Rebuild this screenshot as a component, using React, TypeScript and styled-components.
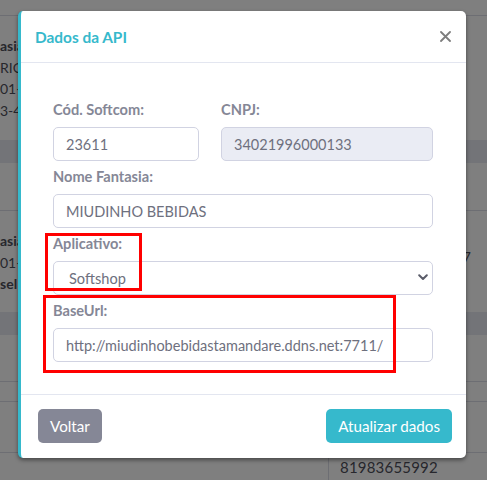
import React from "react";
import styled, { createGlobalStyle } from "styled-components";

const GlobalStyle = createGlobalStyle`
  html, body { margin: 0; padding: 0; }
  body { font-family: "Lato", "Noto Sans", sans-serif; }
  * { box-sizing: border-box; }
`;

const Page = styled.div`
  position: relative;
  width: 487px;
  height: 480px;
  overflow: hidden;
  background: #ffffff;
  color: #5a5c69;
`;

const Backdrop = styled.div`
  display: flex;
  flex-direction: column;
`;

const BgRow = styled.div<{ $h: number; $band?: boolean; $line?: boolean }>`
  height: ${(p) => p.$h}px;
  background: ${(p) => (p.$band ? "#e6e8f0" : "#ffffff")};
  border-bottom: ${(p) => (p.$line ? "1px solid #dadce6" : "none")};
  display: flex;
  justify-content: space-between;
`;

const BgCellLeft = styled.div`
  display: flex;
  flex-direction: column;
  padding-top: 19px;
  font-size: 14px;
  line-height: 21.7px;
  color: #4e4f5a;
`;

const BgText = styled.span<{ $bold?: boolean }>`
  font-weight: ${(p) => (p.$bold ? 700 : 400)};
  white-space: nowrap;
`;

const BgCellRight = styled.div`
  padding-top: 37px;
  padding-right: 16px;
  font-size: 14px;
  color: #4e4f5a;
`;

const BgSplitRow = styled.div<{ $h: number; $line?: boolean }>`
  height: ${(p) => p.$h}px;
  display: grid;
  grid-template-columns: 328px 1fr;
  border-bottom: ${(p) => (p.$line ? "1px solid #dadce6" : "none")};
`;

const BgSplitCell = styled.div`
  border-left: 1px solid #dadce6;
  padding: 5px 0 0 11px;
  font-size: 15px;
  color: #4e4f5a;
  letter-spacing: 0.2px;
`;

const Overlay = styled.div`
  position: absolute;
  inset: 0;
  background: rgba(0, 0, 0, 0.5);
`;

const Modal = styled.div`
  position: absolute;
  left: 18px;
  top: 11px;
  width: 448px;
  background: #ffffff;
  border-left: 3px solid #36b9cc;
  border-radius: 5px;
  box-shadow: 0 2px 4px rgba(0, 0, 0, 0.45);
  display: flex;
  flex-direction: column;
`;

const Header = styled.div`
  height: 52px;
  padding: 0 15px 0 14px;
  display: flex;
  align-items: center;
  justify-content: space-between;
  border-bottom: 1px solid #e3e6f0;
`;

const Title = styled.h5`
  margin: 0;
  font-size: 15.4px;
  font-weight: 700;
  color: #36b9cc;
`;

const CloseButton = styled.button`
  border: 0;
  background: transparent;
  padding: 0;
  width: 12px;
  height: 12px;
  display: flex;
  align-items: center;
  justify-content: center;
  cursor: pointer;
`;

const Body = styled.div`
  padding: 36px 33px 32px 32px;
  display: flex;
  flex-direction: column;
  gap: 5px;
`;

const TwoCols = styled.div`
  display: grid;
  grid-template-columns: 146px 212px;
  column-gap: 22px;
`;

const Field = styled.div`
  display: flex;
  flex-direction: column;
`;

const Label = styled.label`
  height: 22px;
  line-height: 22px;
  margin-bottom: 6px;
  font-size: 14.6px;
  font-weight: 700;
  color: #858796;
`;

const Input = styled.input`
  height: 34px;
  width: 100%;
  padding: 0 12px;
  font-family: inherit;
  font-size: 14.5px;
  color: #6e707e;
  background: ${(p) => (p.disabled ? "#eaecf4" : "#ffffff")};
  border: 1px solid #d1d3e2;
  border-radius: 5px;
  outline: none;
  &:disabled { opacity: 1; color: #6e707e; -webkit-text-fill-color: #6e707e; }
`;

const SelectWrap = styled.div`
  position: relative;
  height: 34px;
`;

const Select = styled.select`
  appearance: none;
  -webkit-appearance: none;
  height: 34px;
  width: 100%;
  padding: 0 30px 0 15px;
  font-family: inherit;
  font-size: 14.6px;
  color: #6e707e;
  background: #ffffff;
  border: 1px solid #d1d3e2;
  border-radius: 5px;
  outline: none;
`;

const Chevron = styled.svg`
  position: absolute;
  right: 5px;
  top: 13px;
  pointer-events: none;
`;

const Footer = styled.div`
  border-top: 1px solid #e3e6f0;
  padding: 14px 14px 15px 17px;
  display: flex;
  justify-content: space-between;
  align-items: center;
`;

const Button = styled.button<{ $variant: "secondary" | "info" }>`
  height: 34px;
  padding: 0 12px;
  border: 0;
  border-radius: 5px;
  font-family: inherit;
  font-size: 15.2px;
  font-weight: 400;
  color: #ffffff;
  background: ${(p) => (p.$variant === "info" ? "#36b9cc" : "#858796")};
  cursor: pointer;
`;

const Highlight = styled.div<{ $x: number; $y: number; $w: number; $h: number }>`
  position: absolute;
  left: ${(p) => p.$x}px;
  top: ${(p) => p.$y}px;
  width: ${(p) => p.$w}px;
  height: ${(p) => p.$h}px;
  border: 3px solid #ff0000;
  pointer-events: none;
`;

export default function App() {
  return (
    <>
      <GlobalStyle />
      <Page>
        <Backdrop>
          <BgRow $h={16} $line />
          <BgRow $h={124}>
            <BgCellLeft>
              <BgText $bold>asia</BgText>
              <BgText>RIC</BgText>
              <BgText>01-</BgText>
              <BgText>3-4</BgText>
            </BgCellLeft>
          </BgRow>
          <BgRow $h={23} $band />
          <BgRow $h={48} $line />
          <BgRow $h={101}>
            <BgCellLeft>
              <BgText $bold>asia</BgText>
              <BgText>01-</BgText>
              <BgText $bold>sel</BgText>
            </BgCellLeft>
            <BgCellRight>
              <BgText>99997</BgText>
            </BgCellRight>
          </BgRow>
          <BgRow $h={23} $band />
          <BgRow $h={47} $line />
          <BgRow $h={20} $line />
          <BgSplitRow $h={51} $line>
            <div />
            <BgSplitCell />
          </BgSplitRow>
          <BgSplitRow $h={30}>
            <div />
            <BgSplitCell>81983655992</BgSplitCell>
          </BgSplitRow>
        </Backdrop>
        <Overlay />
        <Modal>
          <Header>
            <Title>Dados da API</Title>
            <CloseButton aria-label="Fechar">
              <svg width="11" height="11" viewBox="0 0 11 11">
                <path d="M1 1 L10 10 M10 1 L1 10" stroke="#7d7d7d" strokeWidth="1.8" strokeLinecap="round" />
              </svg>
            </CloseButton>
          </Header>
          <Body>
            <TwoCols>
              <Field>
                <Label>Cód. Softcom:</Label>
                <Input defaultValue="23611" />
              </Field>
              <Field>
                <Label>CNPJ:</Label>
                <Input defaultValue="34021996000133" disabled />
              </Field>
            </TwoCols>
            <Field>
              <Label>Nome Fantasia:</Label>
              <Input defaultValue="MIUDINHO BEBIDAS" />
            </Field>
            <Field>
              <Label>Aplicativo:</Label>
              <SelectWrap>
                <Select defaultValue="Softshop">
                  <option>Softshop</option>
                </Select>
                <Chevron width="10" height="7" viewBox="0 0 10 7">
                  <path d="M1.2 1.3 L5 5 L8.8 1.3" fill="none" stroke="#5a5c69" strokeWidth="2" strokeLinecap="round" strokeLinejoin="round" />
                </Chevron>
              </SelectWrap>
            </Field>
            <Field>
              <Label>BaseUrl:</Label>
              <Input defaultValue="http://miudinhobebidastamandare.ddns.net:7711/" />
            </Field>
          </Body>
          <Footer>
            <Button $variant="secondary">Voltar</Button>
            <Button $variant="info">Atualizar dados</Button>
          </Footer>
        </Modal>
        <Highlight $x={45} $y={233} $w={97} $h={58} />
        <Highlight $x={43} $y={295} $w={353} $h={78} />
      </Page>
    </>
  );
}
